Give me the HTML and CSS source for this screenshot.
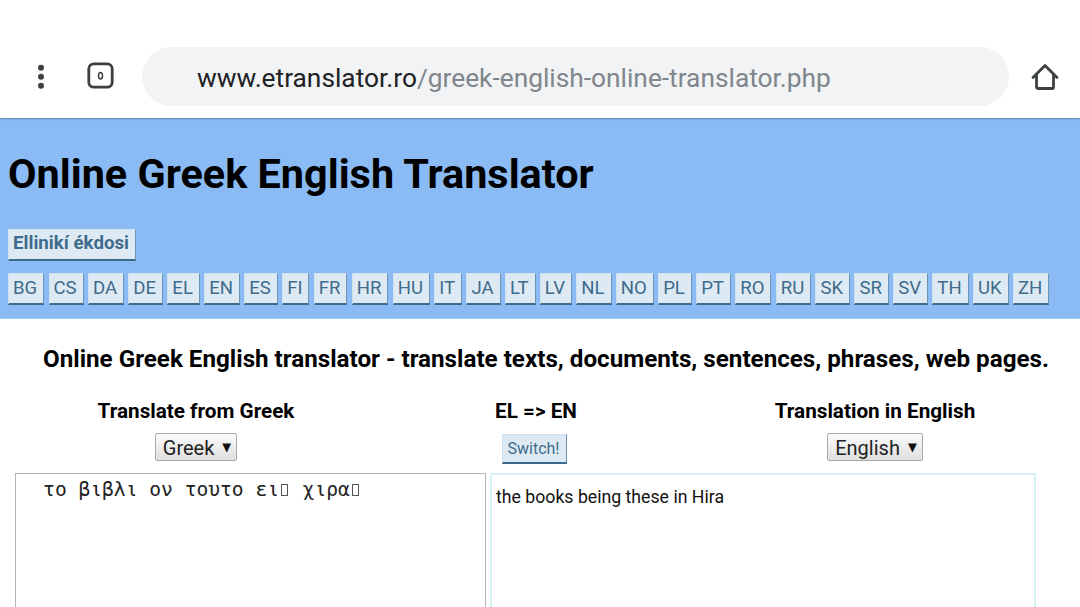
FILE: index.html
```html
<!DOCTYPE html>
<html lang="en">
<head>
<meta charset="utf-8">
<title>Online Greek English Translator</title>
<link rel="stylesheet" href="styles.css">
</head>
<body>
<div class="browser-bar">
  <svg class="icon-menu" width="8" height="26" viewBox="0 0 8 26"><circle cx="4" cy="4.700" r="3" fill="#3c4043"/><circle cx="4" cy="13.700" r="3" fill="#3c4043"/><circle cx="4" cy="22.700" r="3" fill="#3c4043"/></svg>
  <svg class="icon-tabs" width="28" height="28" viewBox="0 0 28 28"><rect x="1.800" y="1.800" width="23.400" height="23.400" rx="5" fill="none" stroke="#3c4043" stroke-width="2.800"/><ellipse cx="13.500" cy="13.800" rx="2" ry="3.200" fill="none" stroke="#3c4043" stroke-width="1.500"/></svg>
  <div class="omnibox"><span class="host">www.etranslator.ro</span><span class="path">/greek-english-online-translator.php</span></div>
  <svg class="icon-home" width="28" height="28" viewBox="0 0 28 28"><path d="M2 14.500 14 2.500l12 12M5.500 12v12.200a1.300 1.300 0 0 0 1.300 1.300h14.400a1.300 1.300 0 0 0 1.300-1.300V12" fill="none" stroke="#3c4043" stroke-width="2.800" stroke-linecap="round" stroke-linejoin="round"/></svg>
</div>
<header class="site-header">
  <h1 class="site-title">Online Greek English Translator</h1>
  <a class="btn btn-bold">Ellinikí ékdosi</a>
  <nav class="lang-list">
    <a class="btn">BG</a><a class="btn">CS</a><a class="btn">DA</a><a class="btn">DE</a><a class="btn">EL</a><a class="btn">EN</a><a class="btn">ES</a><a class="btn">FI</a><a class="btn">FR</a><a class="btn">HR</a><a class="btn">HU</a><a class="btn">IT</a><a class="btn">JA</a><a class="btn">LT</a><a class="btn">LV</a><a class="btn">NL</a><a class="btn">NO</a><a class="btn">PL</a><a class="btn">PT</a><a class="btn">RO</a><a class="btn">RU</a><a class="btn">SK</a><a class="btn">SR</a><a class="btn">SV</a><a class="btn">TH</a><a class="btn">UK</a><a class="btn">ZH</a>
  </nav>
</header>
<main class="content">
  <h2 class="headline">Online Greek English translator - translate texts, documents, sentences, phrases, web pages.</h2>
  <div class="controls">
    <div class="col">
      <div class="col-title">Translate from Greek</div>
      <div class="select">Greek<span class="arrow">▼</span></div>
    </div>
    <div class="col">
      <div class="col-title">EL =&gt; EN</div>
      <a class="btn btn-switch">Switch!</a>
    </div>
    <div class="col">
      <div class="col-title">Translation in English</div>
      <div class="select">English<span class="arrow">▼</span></div>
    </div>
  </div>
  <div class="panes">
    <div class="pane-source">  το βιβλι ον τουτο ει<span class="tofu"></span> χιρα<span class="tofu"></span></div>
    <div class="pane-result">the books being these in Hira</div>
  </div>
</main>
</body>
</html>
```
FILE: styles.css
```css
html, body {
  margin: 0;
  padding: 0;
  height: 607px;
  overflow: hidden;
  background: #fff;
  font-family: Roboto, "Liberation Sans", sans-serif;
  color: #000;
}
.browser-bar {
  height: 118px;
  box-sizing: border-box;
  padding-top: 47px;
  display: flex;
  align-items: flex-start;
  background: #fff;
  position: relative;
  z-index: 1;
  box-shadow: 0 1px 2px rgba(60, 80, 110, .45);
}
.icon-menu { margin: 16px 0 0 37px; }
.icon-tabs { margin: 15px 0 0 42px; }
.omnibox {
  margin-left: 27px;
  width: 867px;
  height: 59px;
  box-sizing: border-box;
  padding-left: 55px;
  border-radius: 30px;
  background: #f1f3f4;
  font-size: 26.300px;
  line-height: 63px;
  white-space: nowrap;
}
.host { color: #202124; }
.path { color: #80868b; }
.icon-home { margin: 16px 0 0 22px; }
.site-header {
  height: 201px;
  box-sizing: border-box;
  padding: 0 8px;
  background: #8abbf5;
  border-bottom: 1px solid #a4c8f2;
}
.site-title {
  margin: 0;
  padding-top: 31px;
  height: 111px;
  box-sizing: border-box;
  font-size: 41.400px;
  line-height: 50px;
  font-weight: 700;
  color: #000;
}
.btn {
  display: inline-block;
  box-sizing: border-box;
  height: 32px;
  padding: 0 6px 0 4px;
  background: #deeaf3;
  color: #3f6b8c;
  font-size: 18.600px;
  line-height: 28px;
  border-right: 1px solid #6c93b3;
  border-bottom: 2px solid #3d6a8c;
  border-top: 1px solid #cfe0ee;
  border-left: 1px solid #cfe0ee;
}
.btn-bold { font-weight: 700; font-size: 18.700px; line-height: 26px; }
.lang-list {
  display: flex;
  gap: 4.250px;
  margin-top: 12px;
}
.headline {
  margin: 0;
  padding: 26px 0 0 43px;
  height: 82px;
  box-sizing: border-box;
  font-size: 24.200px;
  line-height: 28px;
  font-weight: 700;
  white-space: nowrap;
}
.controls {
  display: grid;
  grid-template-columns: 376px 304px 374px;
  padding-left: 8px;
}
.col {
  display: flex;
  flex-direction: column;
  align-items: center;
  height: 72px;
}
.col-title {
  height: 32px;
  font-size: 20.700px;
  line-height: 20px;
  font-weight: 700;
}
.select {
  box-sizing: border-box;
  height: 28px;
  padding: 0 5px 0 7px;
  border: 1px solid #a9a9a9;
  border-radius: 2px;
  background: linear-gradient(#fafafa, #e0e0e0);
  font-size: 20px;
  line-height: 26px;
  color: #222;
}
.arrow {
  font-size: 11.500px;
  margin-left: 8px;
  vertical-align: 4px;
  color: #111;
  font-family: "DejaVu Sans", sans-serif;
}
.btn-switch {
  height: 30px;
  padding: 0 7px 0 5px;
  font-size: 16px;
  line-height: 28px;
  margin: 1px 0 0 -3px;
}
.panes {
  display: flex;
  margin-left: 15px;
  gap: 4px;
}
.pane-source {
  width: 471px;
  height: 200px;
  box-sizing: border-box;
  border: 1px solid #b4b4b4;
  padding: 3px 0 0 3.500px;
  font-family: "DejaVu Sans Mono", monospace;
  font-size: 19.600px;
  line-height: 26px;
  white-space: pre;
  color: #222;
}
.tofu {
  display: inline-block;
  box-sizing: border-box;
  width: 7px;
  height: 12px;
  margin: 0 2.400px;
  border: 1px solid #555;
}
.pane-result {
  width: 546px;
  height: 200px;
  box-sizing: border-box;
  border: 2px solid #d6f2f4;
  padding: 12px 0 0 4px;
  font-size: 17.700px;
  line-height: 20px;
  color: #111;
}
```
